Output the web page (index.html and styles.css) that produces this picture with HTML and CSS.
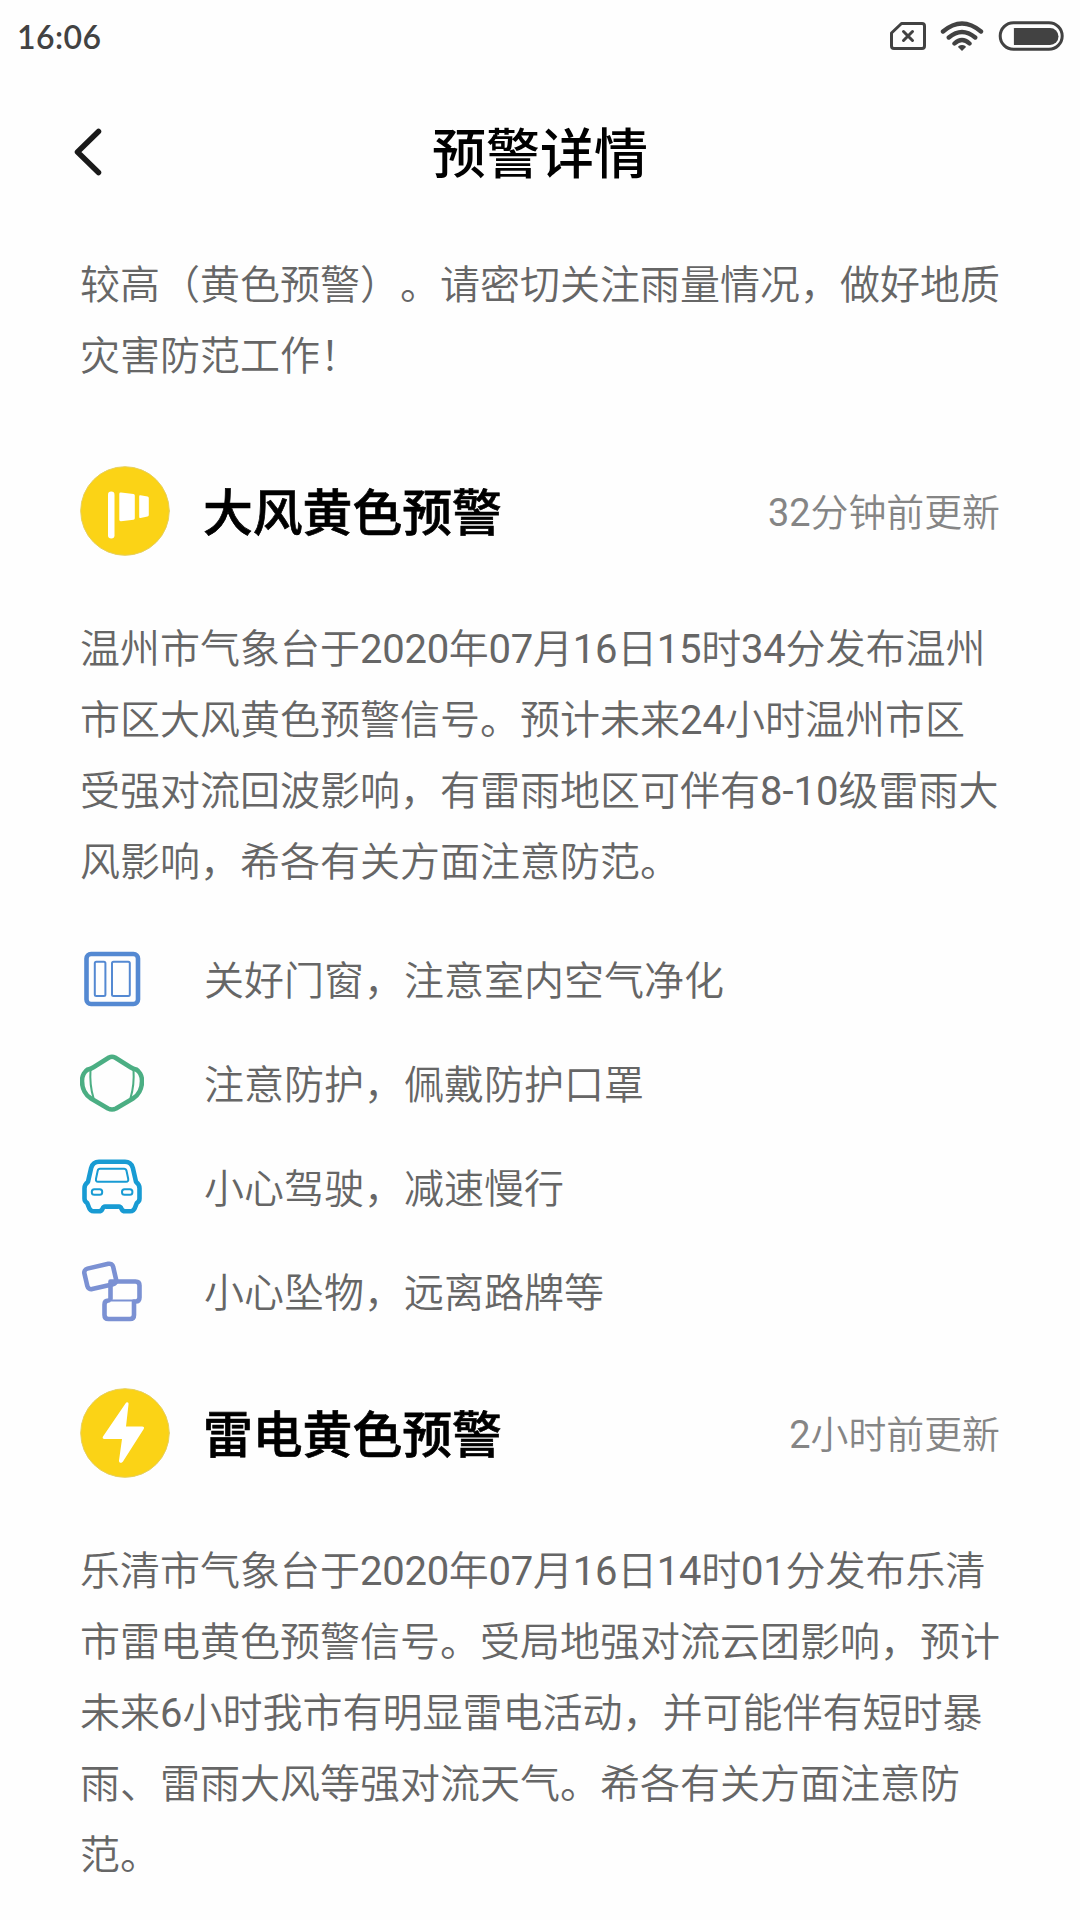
FILE: index.html
```html
<!DOCTYPE html>
<html lang="zh-CN">
	<head>
		<meta charset="utf-8">
		<title>预警详情</title>
		<link rel="stylesheet" href="styles.css">
	</head>
	<body>
		<div class="status_bar">
			<span class="clock">16:06</span>
			<!-- 无SIM卡、wifi、电池 -->
			<svg class="status_icons" width="176" height="34" viewBox="0 0 176 34">
				<path d="M11.500 4.500H32a2.500 2.500 0 0 1 2.500 2.500V27a2.500 2.500 0 0 1-2.500 2.500H4A2.500 2.500 0 0 1 1.500 27V14Z" class="line"/>
				<path d="M13.500 12.500l9 9M22.500 12.500l-9 9" class="line"/>
				<path d="M53 12.500Q72 -3.500 91 12.500M58.800 18.500Q72 7.500 85.200 18.500M64.500 24.500Q72 17.500 79.500 24.500" class="wave"/>
				<path d="M72 26c2.500 0 4 1.500 4 2l-4 4-4-4c0-.5 1.500-2 4-2Z" class="fill"/>
				<rect x="110.200" y="3.700" width="62" height="26.600" rx="13.300" class="shell"/>
				<path d="M124.500 9H160a8.500 8.500 0 0 1 0 17H124.500a.6.600 0 0 1-.6-.6V9.600a.6.600 0 0 1 .6-.6Z" class="fill"/>
			</svg>
		</div>
		<div class="nav">
			<svg class="back" width="32" height="52" viewBox="0 0 32 52">
				<path d="M26.500 5.500L5.500 26l21 20.500"/>
			</svg>
			<h1>预警详情</h1>
		</div>
		<div class="content">
			<p class="text">较高（黄色预警）。请密切关注雨量情况，做好地质<br>灾害防范工作！</p>

			<div class="warn_head">
				<svg class="badge" width="90" height="90" viewBox="0 0 90 90">
					<circle cx="45" cy="45" r="44.300"/>
					<rect x="28" y="25.500" width="6.500" height="47" rx="3.200"/>
					<path d="M41 26.500l12.500 1.500a1.500 1.500 0 0 1 1.300 1.500v22.700a1.500 1.500 0 0 1-1.300 1.500L41 55.200a1.500 1.500 0 0 1-1.700-1.500V28a1.500 1.500 0 0 1 1.700-1.500Z"/>
					<path d="M60.500 29.300l7 1.300a1.600 1.600 0 0 1 1.300 1.500v17a1.600 1.600 0 0 1-1.300 1.500l-7 1.300a1 1 0 0 1-1.300-1V30.300a1 1 0 0 1 1.300-1Z"/>
				</svg>
				<h2>大风黄色预警</h2>
				<span class="time">32分钟前更新</span>
			</div>
			<p class="text">温州市气象台于<span class="date">2020年07月16日15时34</span>分发布温州<br>市区大风黄色预警信号。预计未来24小时温州市区<br>受强对流回波影响，有雷雨地区可伴有8-10级雷雨大<br>风影响，希各有关方面注意防范。</p>

			<ul class="tips">
				<li>
					<svg class="tip_icon window" width="64" height="64" viewBox="0 0 64 64">
						<rect x="6.500" y="7" width="51.500" height="50" rx="4.500"/>
						<rect x="14.800" y="14.800" width="10.600" height="34.200" rx="1.500" class="thin"/>
						<rect x="32" y="14.800" width="17.800" height="34.200" rx="1.500" class="thin"/>
					</svg>
					<span>关好门窗，注意室内空气净化</span>
				</li>
				<li>
					<svg class="tip_icon mask" width="64" height="64" viewBox="0 0 64 64">
						<path d="M29 6.500q3-1.600 6 0L50.500 16.200q3 1.800 5.500 2.200c3 1.600 6 6 6 11.600 0 8-4 14.500-9 17.500L36 57.500q-4 2-8 0L11 47.500c-5-3-9-9.500-9-17.500 0-5.600 3-10 6-11.600q2.500-.4 5.500-2.200Z"/>
						<path d="M10.500 19q-1 15 3 28M53.500 19q1 15-3 28" class="thin"/>
					</svg>
					<span>注意防护，佩戴防护口罩</span>
				</li>
				<li>
					<svg class="tip_icon car" width="64" height="64" viewBox="0 -1 64 64">
						<path d="M19 5.800H45q6 0 7.800 6l3.200 14q3.500 2.500 3.500 6.500v10.200q0 3-2.700 4.500l-1.300 3.300q-1.500 5-5.500 5H45.500q-3 0-4-2.500t-3-2.200H25.500q-2-.3-3 2.200T18.500 55.300H14q-4 0-5.500-5L7.200 47Q4.500 45.500 4.500 42.500V32.300q0-4 3.500-6.500l3.200-14q1.800-6 7.800-6Z"/>
						<path d="M20 12.800H44q2 0 2.500 2l1.700 8q.5 3-2 3H18q-2.500 0-2-3l1.700-8q.4-2 2.300-2Z" class="thin"/>
						<rect x="11.800" y="33.200" width="10.400" height="5.600" rx="2.500" class="thin"/>
						<rect x="42" y="33.200" width="10.400" height="5.600" rx="2.500" class="thin"/>
					</svg>
					<span>小心驾驶，减速慢行</span>
				</li>
				<li>
					<svg class="tip_icon bricks" width="64" height="64" viewBox="0 0 64 64">
						<rect x="5.500" y="7" width="29.500" height="21" rx="4" transform="rotate(-13 20 17.500)"/>
						<path d="M30.500 40V22.500H55.500q4 0 4 4V38.500q0 4-4 4"/>
						<path d="M29 41.500H54" class="thin"/>
						<path d="M28.500 41.500q-4 0-4 4V56q0 4 4 4H50q4 0 4-4V42.500"/>
					</svg>
					<span>小心坠物，远离路牌等</span>
				</li>
			</ul>

			<div class="warn_head second">
				<svg class="badge" width="90" height="90" viewBox="0 0 90 90">
					<circle cx="45" cy="45" r="44.300"/>
					<path d="M45.500 15.500c1-2 3.500-1.500 3 1L46 38.500H62c2 0 2.500 1 1.700 2.500L43 73.500c-1.500 2.300-4.200 1.500-4-1L42 51H24.500c-1.800 0-2.300-1-1.500-2.500Z"/>
				</svg>
				<h2>雷电黄色预警</h2>
				<span class="time">2小时前更新</span>
			</div>
			<p class="text">乐清市气象台于<span class="date">2020年07月16日14时01</span>分发布乐清<br>市雷电黄色预警信号。受局地强对流云团影响，预计<br>未来6小时我市有明显雷电活动，并可能伴有短时暴<br>雨、雷雨大风等强对流天气。希各有关方面注意防<br>范。</p>
		</div>
	</body>
</html>
```

FILE: styles.css
```css
* {
	box-sizing: border-box;
	margin: 0;
	padding: 0;
}

body {
	width: 1080px;
	height: 1920px;
	overflow: hidden;
	background-color: #fefefe;
	font-family: Roboto, "Noto Sans CJK SC", sans-serif;
	text-spacing-trim: space-all;
}

svg {
	flex: none;
	fill: none;
	stroke-linecap: round;
	stroke-linejoin: round;
}

/* 状态栏 */
.status_bar {
	display: flex;
	align-items: center;
	justify-content: space-between;
	height: 72px;
	padding: 0 14px 0 17px;
}

.clock {
	font-family: Lato, sans-serif;
	font-size: 32px;
	font-weight: 600;
	letter-spacing: 0.4px;
	color: #424242;
}

.status_icons .line {
	stroke: #424242;
	stroke-width: 3;
}

.status_icons .wave {
	stroke: #424242;
	stroke-width: 4.4;
}

.status_icons .shell {
	stroke: #424242;
	stroke-width: 3;
}

.status_icons .fill {
	fill: #424242;
}

/* 标题栏 */
.nav {
	display: grid;
	grid-template-columns: 120px 1fr 120px;
	align-items: center;
	height: 160px;
}

.back {
	margin-left: 72px;
	stroke: #1a1a1a;
	stroke-width: 5.5;
}

h1 {
	padding-bottom: 3px;
	font-size: 54px;
	font-weight: 500;
	text-align: center;
	color: #000;
}

/* 正文 */
.content {
	padding: 18px 0 0 80px;
}

.text,
.time,
.tips {
	font-family: Roboto, "Noto Sans CJK SC DemiLight", "Noto Sans CJK SC", sans-serif;
	font-weight: 400;
}

.text {
	font-size: 40px;
	line-height: 71px;
	white-space: nowrap;
	color: #666;
}

.date {
	letter-spacing: -0.27px;
}

.warn_head {
	display: flex;
	align-items: center;
	height: 90px;
	margin: 74px 80px 58px 0;
}

.badge circle {
	fill: #fbd316;
	stroke: #e6cf5c;
	stroke-width: 1;
}

.badge rect,
.badge path {
	fill: #fff;
}

h2 {
	flex: 1;
	padding: 0 0 4px 33px;
	font-size: 49.8px;
	font-weight: 500;
	-webkit-text-stroke: 0.7px #000;
	color: #000;
}

.time {
	padding-bottom: 4px;
	font-size: 37.9px;
	color: #858585;
}

.tips {
	list-style: none;
	padding-top: 29px;
}

.tips li {
	display: flex;
	align-items: center;
	gap: 60px;
	height: 104px;
	font-size: 40px;
	color: #666;
}

.tips span {
	padding-bottom: 2px;
}

.tip_icon {
	stroke-width: 4.6;
}

.tip_icon .thin {
	stroke-width: 2;
}

.window {
	stroke: #5489d2;
}

.mask {
	stroke: #4bae83;
}

.car {
	stroke: #189bd3;
}

.bricks {
	stroke: #7b91d3;
}

.second {
	margin-top: 45px;
}
```
